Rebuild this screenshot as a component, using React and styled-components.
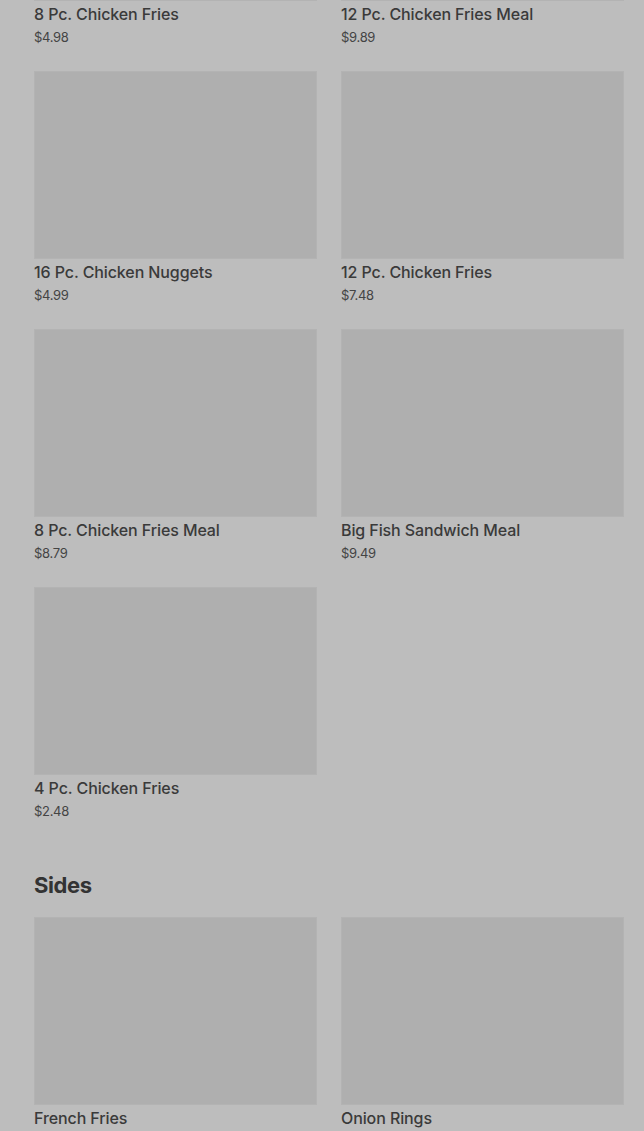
import React from "react";
import styled, { createGlobalStyle } from "styled-components";

const GlobalStyle = createGlobalStyle`
  html, body {
    margin: 0;
    padding: 0;
    background-color: #bdbdbd;
    overflow: hidden;
  }
  body {
    font-family: Inter, "Liberation Sans", sans-serif;
    color: #3a3a3a;
  }
`;

const Page = styled.div`
  width: 590px;
  margin: -187px 0 0 34px;
`;

const Section = styled.section`
  margin-bottom: ${(p) => (p.$last ? "0" : "50px")};
`;

const SectionTitle = styled.h2`
  margin: 0 0 18px;
  font-family: Inter, "Liberation Sans", sans-serif;
  font-size: 22px;
  line-height: 28px;
  font-weight: 700;
  letter-spacing: -0.4px;
  color: #333;
`;

const Grid = styled.div`
  display: grid;
  grid-template-columns: 283px 283px;
  column-gap: 24px;
  row-gap: 24px;
`;

const Card = styled.div`
  display: flex;
  flex-direction: column;
`;

const Thumb = styled.div`
  height: 188px;
  background-color: #afafaf;
  box-shadow: inset 0 0 0 1px #b3b3b3;
`;

const ItemName = styled.div`
  margin-top: 1px;
  font-size: 16px;
  line-height: 24px;
  font-weight: 500;
  letter-spacing: -0.1px;
  color: #3a3a3a;
`;

const Price = styled.div`
  margin-top: 1px;
  font-size: 13px;
  line-height: 20px;
  letter-spacing: -0.3px;
  color: #444;
`;

const chicken = [
  { name: "8 Pc. Chicken Fries", price: "$4.98" },
  { name: "12 Pc. Chicken Fries Meal", price: "$9.89" },
  { name: "16 Pc. Chicken Nuggets", price: "$4.99" },
  { name: "12 Pc. Chicken Fries", price: "$7.48" },
  { name: "8 Pc. Chicken Fries Meal", price: "$8.79" },
  { name: "Big Fish Sandwich Meal", price: "$9.49" },
  { name: "4 Pc. Chicken Fries", price: "$2.48" },
];

const sides = [
  { name: "French Fries", price: "$2.29" },
  { name: "Onion Rings", price: "$2.49" },
];

const MenuItem = ({ item }) => (
  <Card>
    <Thumb />
    <ItemName>{item.name}</ItemName>
    <Price>{item.price}</Price>
  </Card>
);

const App = () => {
  return (
    <>
      <GlobalStyle />
      <Page>
        <Section>
          <Grid>
            {chicken.map((item) => (
              <MenuItem key={item.name} item={item} />
            ))}
          </Grid>
        </Section>

        <Section $last>
          <SectionTitle>Sides</SectionTitle>
          <Grid>
            {sides.map((item) => (
              <MenuItem key={item.name} item={item} />
            ))}
          </Grid>
        </Section>
      </Page>
    </>
  );
};

export default App;
